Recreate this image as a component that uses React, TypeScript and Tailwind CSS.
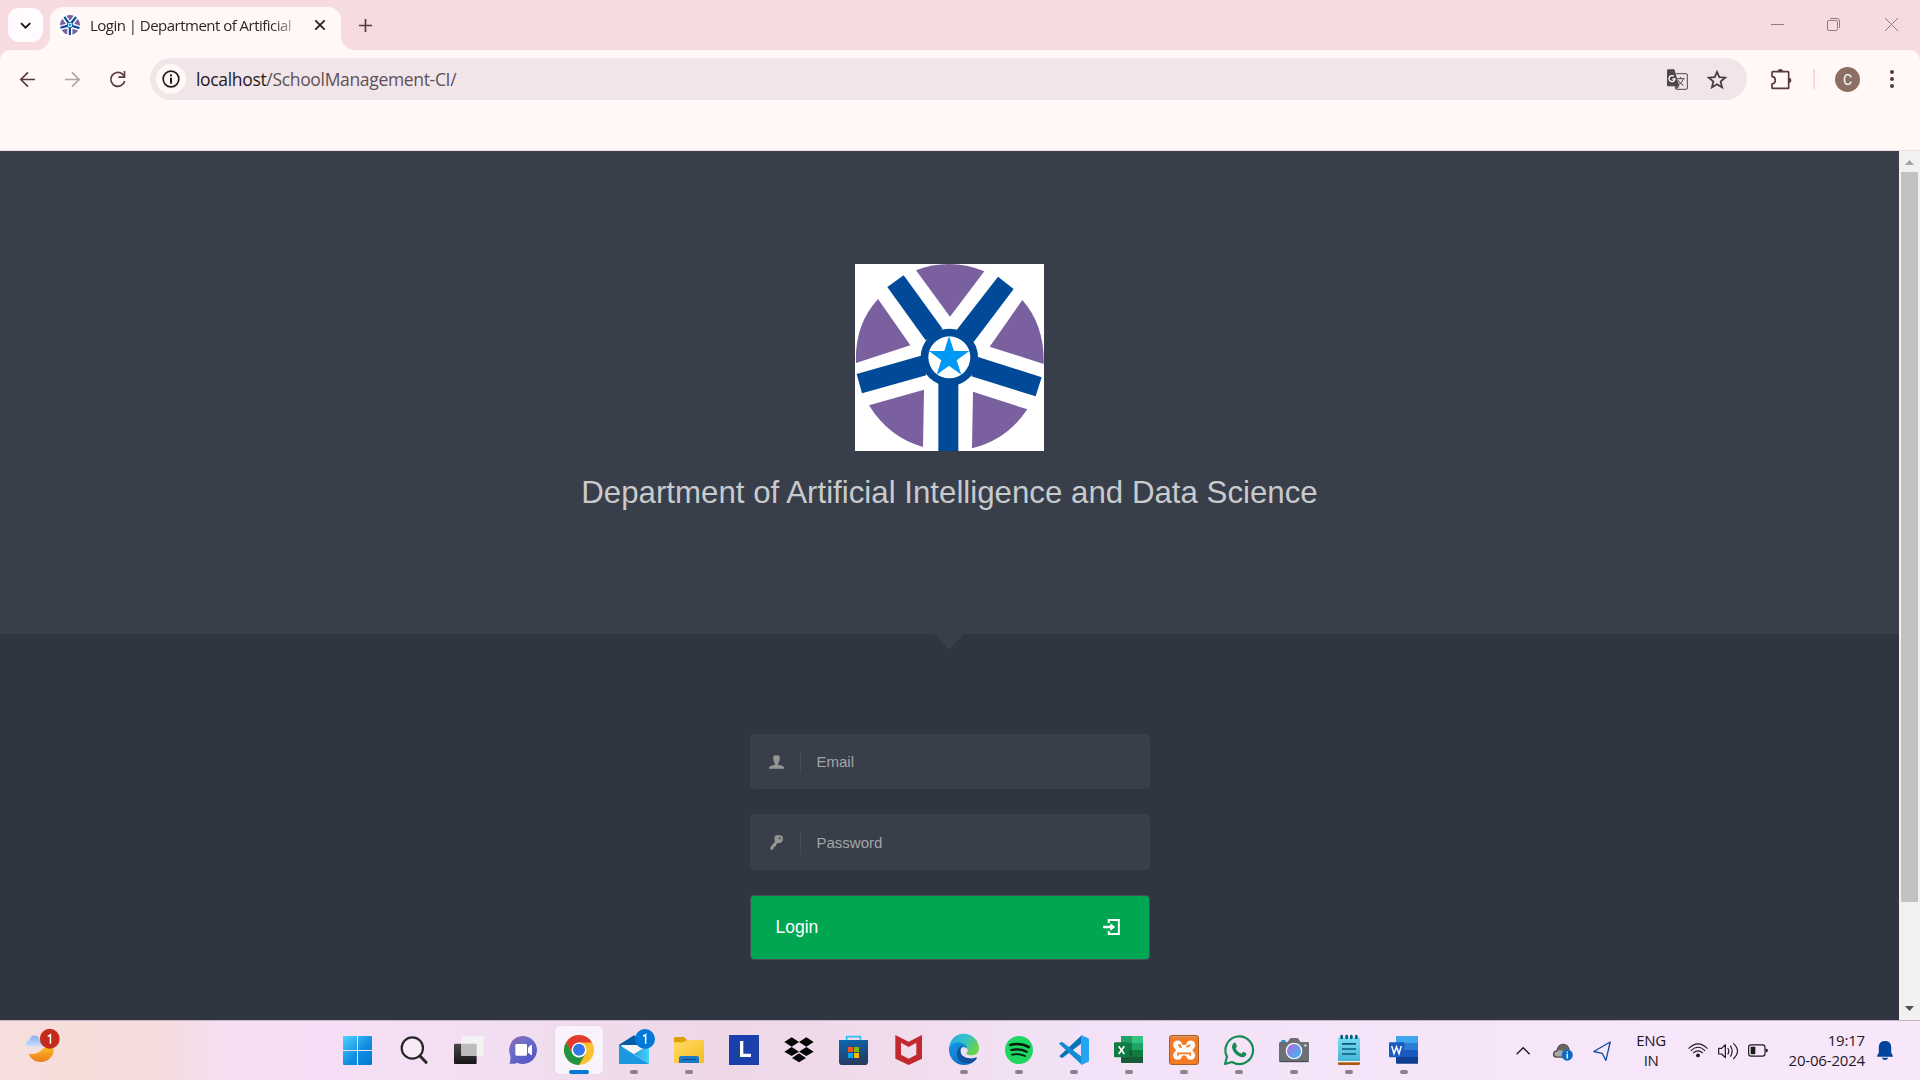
import type { ReactNode } from 'react';

const ui = "font-['Open_Sans','Noto_Sans',sans-serif] font-normal";
const page = "font-['Liberation_Sans',Arial,sans-serif]";

type IconProps = { box: string; w: string; children: ReactNode };

function Icon({ box, w, children }: IconProps) {
  return (
    <svg viewBox={box} className={`block shrink-0 overflow-visible ${w}`} fill="none">
      {children}
    </svg>
  );
}

function Emblem({ className }: { className: string }) {
  return (
    <svg viewBox="45 42 567 561" preserveAspectRatio="none" className={`block ${className}`}>
      <rect x="45" y="42" width="567" height="561" fill="#fff" />
      <g fill="#7b609f">
        <path d="M228 61Q330 22 433 64L330 200Z" />
        <path d="M114 147L211 286L48 339Q43 225 114 147Z" />
        <path d="M547 150L449 290L611 342Q614 226 547 150Z" />
        <path d="M252 419L87 466Q146 562 249 591Z" />
        <path d="M399 425L562 478Q500 570 396 595Z" />
      </g>
      <g fill="#004a99">
        <path d="M142 111L191 76L308 237L257 271Z" />
        <path d="M474 80L521 117L401 276L350 240Z" />
        <path d="M50 372L243 317L259 376L66 430Z" />
        <path d="M605 382L412 320L394 379L587 439Z" />
        <rect x="295" y="395" width="60" height="208" />
        <circle cx="328" cy="322" r="86" />
      </g>
      <circle cx="328" cy="322" r="63" fill="#fff" />
      <path d="M327 258L342 303H388L350 331L364 374L327 347L290 374L304 331L267 303H313Z" fill="#0098f5" />
    </svg>
  );
}

function TabStrip() {
  return (
    <div className="flex h-[50px] items-start bg-[#f6dbe0]">
      <div className="ml-2 mt-2 flex h-[34px] w-[35px] items-center justify-center rounded-[11px] bg-[#fffbfe]">
        <Icon box="60 62 32 26" w="w-[11px] h-[9px]">
          <path d="M63 68L76 81L90 68" stroke="#1f1a1c" strokeWidth="5.5" />
        </Icon>
      </div>
      <div className="-ml-[7px] h-[14px] w-[14px] self-end bg-[radial-gradient(circle_at_0_0,transparent_13.5px,#fff8f6_14.5px)]" />
      <div className="mt-[7px] flex h-[43px] w-[291px] items-center rounded-t-[13px] bg-[#fff8f6]">
        <Emblem className="ml-[10px] -mt-[7px] h-5 w-5" />
        <div className={`ml-[10px] -mt-[8px] w-[206px] whitespace-nowrap text-[15px] leading-5 tracking-[-0.52px] text-[#2c2628] [mask-image:linear-gradient(to_right,black_88%,rgba(0,0,0,0.25)_100%)] ${ui}`}>
          Login | Department of Artificial
        </div>
        <div className="ml-[19px] -mt-[7px]">
          <Icon box="945 60 30 30" w="w-[10px] h-[10px]">
            <path d="M946 61L974 89M974 61L946 89" stroke="#2b2225" strokeWidth="5.5" />
          </Icon>
        </div>
      </div>
      <div className="h-[14px] w-[14px] self-end bg-[radial-gradient(circle_at_100%_0,transparent_13.5px,#fff8f6_14.5px)]" />
      <div className="ml-1 mt-[18.500px]">
        <Icon box="1077 56 39 39" w="w-[13px] h-[13px]">
          <path d="M1096.500 56V95M1077 75.500H1116" stroke="#4b3d40" strokeWidth="5" />
        </Icon>
      </div>
      <div className="ml-auto mr-[22px] mt-[18px] flex">
        <Icon box="453 54 39 39" w="w-[13px] h-[13px]">
          <path d="M453 73.500H492" stroke="#8f7d80" strokeWidth="3" />
        </Icon>
        <div className="ml-[43px]">
          <Icon box="621 54 39 39" w="w-[13px] h-[13px]">
            <rect x="622.500" y="61.500" width="30" height="30" rx="4" stroke="#8f7d80" strokeWidth="3" />
            <path d="M630 55.500H651Q658.500 55.500 658.500 63V84" stroke="#8f7d80" strokeWidth="3" />
          </Icon>
        </div>
        <div className="ml-[45px]">
          <Icon box="795 54 39 39" w="w-[13px] h-[13px]">
            <path d="M795 54L834 93M834 54L795 93" stroke="#8f7d80" strokeWidth="3" />
          </Icon>
        </div>
      </div>
    </div>
  );
}

function Toolbar() {
  return (
    <div className="bg-[#f6dbe0]">
      <div className="h-[101px] rounded-t-[10px] border-b border-[#f6dbe0] bg-[#fff8f6] pt-2">
        <div className="flex h-[42px] items-center">
          <div className="ml-5 w-[45px]">
            <Icon box="60 214 45 45" w="w-[15px] h-[15px]">
              <path d="M105 236.500H64M84 215L62.500 236.500L84 258" stroke="#58393d" strokeWidth="5" />
            </Icon>
          </div>
          <div className="w-[45px]">
            <Icon box="195 214 45 45" w="w-[15px] h-[15px]">
              <path d="M195 236.500H236M216 215L237.500 236.500L216 258" stroke="#b1a5a5" strokeWidth="5" />
            </Icon>
          </div>
          <div className="w-10">
            <Icon box="330 212 48 48" w="w-4 h-4">
              <path d="M374 242A21 21 0 1 1 367 221L373 227" stroke="#58393d" strokeWidth="5" />
              <path d="M376 212V233H355V228H371V212Z" fill="#58393d" />
            </Icon>
          </div>
          <div className="flex h-[42px] w-[1597px] items-center rounded-full bg-[#f1e5e9] pl-[6px]">
            <div className="flex h-[30px] w-[30px] items-center justify-center rounded-full bg-[#fff8f6]">
              <Icon box="487 211 54 54" w="w-[18px] h-[18px]">
                <circle cx="514" cy="238" r="23.500" stroke="#201a1b" strokeWidth="5" />
                <rect x="511" y="234" width="6" height="18" fill="#201a1b" />
                <rect x="511" y="224" width="6" height="6" fill="#201a1b" />
              </Icon>
            </div>
            <div className={`-mt-px ml-[10px] whitespace-nowrap text-[17.500px] leading-6 tracking-[-0.33px] text-[#1f1a1c] ${ui}`}>
              localhost<span className="text-[#5e5156]">/SchoolManagement-CI/</span>
            </div>
            <div className="ml-auto">
              <Icon box="141 207 63 63" w="w-[21px] h-[21px]">
                <rect x="166" y="221" width="36" height="47" rx="4" stroke="#514648" strokeWidth="3" />
                <path d="M145 208H163L178 259H145Q141 259 141 255V212Q141 208 145 208Z" fill="#514648" />
                <path d="M162 229A9 9 0 1 0 165 237H157" stroke="#fff" strokeWidth="4" />
                <path d="M170 236H194M182 231V236M190 237Q186 250 172 257M175 241Q180 252 191 256" stroke="#514648" strokeWidth="3" />
                <path d="M167 259H178L170 268Z" fill="#514648" />
              </Icon>
            </div>
            <div className="ml-[19px] mr-5">
              <Icon box="263 209 60 58" w="w-5 h-[19px]">
                <path d="M293 215L300 231L318 232.500L304 244.500L308.500 262L293 252.500L277.500 262L282 244.500L268 232.500L286 231Z" stroke="#4a3d40" strokeWidth="5.500" />
              </Icon>
            </div>
          </div>
          <div className="ml-6">
            <Icon box="453 204 63 63" w="w-[21px] h-[21px]">
              <path d="M458 212H504Q506 212 506 214V260Q506 262 504 262H458Q456 262 456 260V249Q466 247 466 237.500Q466 228 456 226V214Q456 212 458 212Z" stroke="#58393d" strokeWidth="5" />
              <path d="M473 212A8 8 0 0 1 489 212ZM506 230A8 8 0 0 1 506 246Z" fill="#58393d" />
            </Icon>
          </div>
          <div className="ml-[21px] h-5 w-[2px] bg-[#f9d8de]" />
          <div className="ml-5 flex h-[25px] w-[25px] items-center justify-center rounded-full bg-[#8d6e63] pt-px font-['Roboto',sans-serif] text-[14px] leading-none text-white">C</div>
          <div className="ml-[30px]">
            <Icon box="811 209 12 54" w="w-1 h-[18px]">
              <g fill="#58393d">
                <circle cx="817" cy="215" r="6" />
                <circle cx="817" cy="236" r="6" />
                <circle cx="817" cy="257" r="6" />
              </g>
            </Icon>
          </div>
        </div>
      </div>
    </div>
  );
}

function Field({ label, icon, size }: { label: string; icon: ReactNode; size: string }) {
  return (
    <div className={`flex w-[400px] items-center rounded-[4px] bg-[#383e4a] ${size}`}>
      <div className="flex w-[50px] justify-center pl-[2px]">{icon}</div>
      <div className="h-[23px] w-px bg-[#464a54]" />
      <div className="ml-[15.500px] mt-px text-[15px] leading-5 text-[#a4a5a8]">{label}</div>
    </div>
  );
}

function LoginPage() {
  return (
    <div className={`flex h-[869px] ${page}`}>
      <main className="flex w-[1899px] flex-col items-center bg-[#303641]">
        <header className="flex h-[483px] w-full flex-col items-center bg-[#383e4a] pt-[113px]">
          <Emblem className="h-[187px] w-[189px]" />
          <h1 className="mt-[22px] whitespace-nowrap text-[31.250px] leading-10 text-[#c8cacc]">
            Department of Artificial Intelligence and Data Science
          </h1>
        </header>
        <div className="-ml-px h-4 w-[30px] bg-[#383e4a] [clip-path:polygon(0_0,100%_0,50%_100%)]" />
        <form className="mt-[84px] flex flex-col pl-[1px]">
          <Field
            label="Email"
            size="h-[55px]"
            icon={
              <Icon box="86 404 45 41" w="w-[15px] h-[14px]">
                <path d="M99 408Q100 404 108.500 404Q117 404 118 408Q120 422 113 429V433Q128 436 131 440V445H86V440Q90 436 104 433V429Q97 422 99 408Z" fill="#969594" />
              </Icon>
            }
          />
          <Field
            label="Password"
            size="mt-[25px] h-14"
            icon={
              <Icon box="86 644 45 45" w="w-[15px] h-[15px]">
                <path d="M107 645H121Q128 647 128 654Q128 666 119 668L111 669L107 673V678L102 679L99 686L93 690L90 687L91 679L104 664L102 654Q103 647 107 645Z" fill="#969594" />
                <circle cx="118.500" cy="653.500" r="3.500" fill="#565a63" />
              </Icon>
            }
          />
          <button type="button" className="mt-[25px] flex h-[65px] w-[400px] items-center justify-between rounded-[4px] border border-[#4b4d57] bg-[#00a651] pl-[24.500px] pr-[29px] text-left text-[17.500px] text-white">
            Login
            <div className="-mt-[2px]">
              <Icon box="1089 896 51 49" w="w-[17px] h-4">
                <path d="M1106 908V899H1137V942H1106V933" stroke="#fff" strokeWidth="6" />
                <path d="M1089 917H1111V909L1126 920.500L1111 932V924H1089Z" fill="#fff" />
              </Icon>
            </div>
          </button>
        </form>
      </main>
      <div className="flex w-[21px] flex-col items-center bg-[#f1f1f1] pt-[9px]">
        <div className="h-[5px] w-[9px] bg-[#a3a3a3] [clip-path:polygon(50%_0,100%_100%,0_100%)]" />
        <div className="mt-[7px] h-[730px] w-[17px] bg-[#c1c1c1]" />
        <div className="mb-[9px] mt-auto h-[5px] w-[9px] bg-[#505050] [clip-path:polygon(0_0,100%_0,50%_100%)]" />
      </div>
    </div>
  );
}

function Gradients() {
  return (
    <svg className="absolute h-0 w-0">
      <defs>
        <linearGradient id="win" x1="72" y1="78" x2="156" y2="165" gradientUnits="userSpaceOnUse"><stop stopColor="#4fcfff" /><stop offset=".55" stopColor="#118ddf" /><stop offset="1" stopColor="#0078d4" /></linearGradient>
        <linearGradient id="teams" x1="0" y1="0" x2="0.7" y2="1"><stop stopColor="#9a5ca0" /><stop offset=".4" stopColor="#6b6fca" /><stop offset="1" stopColor="#5355c5" /></linearGradient>
        <linearGradient id="dark" x1="0" y1="0" x2="0" y2="1"><stop stopColor="#484848" /><stop offset="1" stopColor="#171717" /></linearGradient>
        <linearGradient id="folder" x1="0" y1="0" x2="1" y2="1"><stop stopColor="#ffd965" /><stop offset="1" stopColor="#f8bd22" /></linearGradient>
        <linearGradient id="store" x1="0" y1="0" x2=".3" y2="1"><stop stopColor="#0b68b4" /><stop offset="1" stopColor="#263c61" /></linearGradient>
        <linearGradient id="edgeTop" x1="0" y1="0" x2="1" y2=".5"><stop stopColor="#1fa8e5" /><stop offset=".55" stopColor="#35c3c8" /><stop offset="1" stopColor="#68d34b" /></linearGradient>
        <linearGradient id="edgeBlue" x1="0" y1="0" x2="1" y2="1"><stop stopColor="#1698e6" /><stop offset="1" stopColor="#0762bb" /></linearGradient>
        <linearGradient id="moon" x1="0" y1="0" x2="0" y2="1"><stop stopColor="#fdb91e" /><stop offset="1" stopColor="#ed7b21" /></linearGradient>
        <linearGradient id="cloud" x1="0" y1="0" x2="0" y2="1"><stop stopColor="#86adef" /><stop offset="1" stopColor="#cee0fa" /></linearGradient>
        <linearGradient id="lens" x1="0" y1="0" x2="1" y2="1"><stop stopColor="#c163de" /><stop offset="1" stopColor="#26c2f3" /></linearGradient>
        <linearGradient id="pad" x1="0" y1="0" x2="0" y2="1"><stop stopColor="#7bdcf0" /><stop offset="1" stopColor="#45b5d6" /></linearGradient>
        <linearGradient id="mail" x1="0" y1="0" x2="1" y2="0"><stop stopColor="#26a4e4" /><stop offset="1" stopColor="#45d2f5" /></linearGradient>
      </defs>
    </svg>
  );
}

type App = { name: string; box: string; state?: 'active' | 'open'; art: ReactNode };

const apps: App[] = [
  { name: 'Start', box: '72 75 90 90', art: (
    <g fill="url(#win)"><path d="M72 78H111V120H69V81Q69 78 72 78ZM114 78H153Q156 78 156 81V120H114ZM69 123H111V165H72Q69 165 69 162ZM114 123H156V162Q156 165 153 165H114Z" /></g>
  ) },
  { name: 'Search', box: '237 75 90 90', art: (
    <g stroke="#292727"><circle cx="277" cy="114" r="32" strokeWidth="6.500" fill="#fff" fillOpacity=".35" /><path d="M300 138L318 157" strokeWidth="9" strokeLinecap="round" /></g>
  ) },
  { name: 'Task view', box: '402 75 90 90', art: (
    <><rect x="402" y="101" width="68" height="61" rx="3" fill="url(#dark)" /><rect x="424" y="78" width="67" height="60" rx="3" fill="#f4f3f4" /><path d="M424 101H467Q470 101 470 104V138H427Q424 138 424 135Z" fill="#bdbbbc" /></>
  ) },
  { name: 'Chat', box: '567 75 90 90', art: (
    <><path d="M610 78A42 42 0 1 1 591 158Q583 163 568 161Q573 150 571 137A42 42 0 0 1 610 78Z" fill="url(#teams)" /><rect x="586" y="102" width="35" height="35" rx="4" fill="#fff" /><path d="M624 113L633 104Q636 104 636 107V133Q636 136 633 136L624 127Z" fill="#fff" /></>
  ) },
  { name: 'Chrome', box: '252 75 90 90', state: 'active', art: (
    <><circle cx="297" cy="120" r="45" fill="#fbc02d" /><path d="M258 97.500A45 45 0 0 1 336 97.500H297L277.500 131Z" fill="#e33b2e" /><path d="M258 97.500A45 45 0 0 0 297 165L316.500 131L297 142L277.500 131Z" fill="#229342" /><circle cx="297" cy="120" r="22.500" fill="#fff" /><circle cx="297" cy="119" r="18" fill="#3478e8" /></>
  ) },
  { name: 'Mail', box: '417 75 90 90', state: 'open', art: (
    <><path d="M417 104L462 76L507 104V130H417Z" fill="#075aa8" /><path d="M424 105H500V132H424Z" fill="#f5f5f5" /><path d="M417 104L507 162H420Q417 162 417 159Z" fill="#1b99e0" /><path d="M507 104V162L462 132Z" fill="url(#mail)" /><circle cx="495" cy="87" r="30" fill="#0279d6" /><path d="M489 79L497 74V101" stroke="#fff" strokeWidth="4.500" /></>
  ) },
  { name: 'Files', box: '582 75 90 90', state: 'open', art: (
    <><path d="M582 84Q582 81 586 81H610Q614 81 617 86L622 91H668V110H582Z" fill="#dba006" /><path d="M582 97H610L620 90H669Q672 90 672 93V156Q672 159 669 159H585Q582 159 582 156Z" fill="url(#folder)" /><path d="M597 159V144Q597 138 603 138H651Q657 138 657 144V159Z" fill="#1a78c7" /><path d="M607 148.500H647" stroke="#064a85" strokeWidth="3" /></>
  ) },
  { name: 'L', box: '747 75 90 90', art: (
    <><rect x="747" y="75" width="90" height="90" fill="#1b3fac" /><path d="M780 94L772 145L784 142Z" fill="#0a5560" /><path d="M785 93V136H813" stroke="#fff" strokeWidth="10" /></>
  ) },
  { name: 'Dropbox', box: '-18 75 90 90', art: (
    <path d="M5 82L27 96L5 110L-17 96ZM49 82L71 96L49 110L27 96ZM5 111L27 125L5 138L-17 125ZM49 111L71 125L49 138L27 125ZM27 130L48 144L27 157L6 144Z" fill="#050505" />
  ) },
  { name: 'Store', box: '147 75 90 90', art: (
    <><path d="M170 96V80H211V96" stroke="#2fc2f7" strokeWidth="5" /><path d="M147 90H234V155Q234 165 224 165H157Q147 165 147 155Z" fill="url(#store)" /><path d="M174 111H189V126H174Z" fill="#f35325" /><path d="M192 111H207V126H192Z" fill="#81bc06" /><path d="M174 129H189V144H174Z" fill="#05a6f0" /><path d="M192 129H207V144H192Z" fill="#ffba08" /></>
  ) },
  { name: 'McAfee', box: '312 75 90 90', art: (
    <path fillRule="evenodd" d="M316 75L356 95L396 75V146L356 165L316 146ZM333 98V134L356 146L379 134V98L356 111Z" fill="#c1292e" />
  ) },
  { name: 'Edge', box: '477 75 90 90', state: 'open', art: (
    <><path d="M477 120A45 45 0 0 1 567 113Q567 135 545 136Q530 136 529 130Q538 122 528 111Q500 90 477 120Z" fill="url(#edgeTop)" /><path d="M477 118Q482 97 505 97Q528 99 532 116Q517 104 511 120Q510 150 553 146Q560 142 561 144Q547 166 521 165A45 45 0 0 1 477 118Z" fill="url(#edgeBlue)" /><path d="M514 107Q493 124 505 147Q514 160 538 160Q552 157 561 144Q560 140 550 145Q512 148 511 121Q511 111 517 108Z" fill="#12529c" /></>
  ) },
  { name: 'Spotify', box: '642 75 90 90', state: 'open', art: (
    <><circle cx="687" cy="120" r="42" fill="#1ed760" /><g stroke="#08170d" strokeLinecap="round"><path d="M661 105Q691 97 716 111" strokeWidth="8" /><path d="M664 120Q689 114 710 125" strokeWidth="6.500" /><path d="M666 134Q687 129 705 138" strokeWidth="5.500" /></g></>
  ) },
  { name: 'VS Code', box: '807 75 90 90', state: 'open', art: (
    <><path d="M809 137L876 75V99L818 143Q816 144 814 143L808 139Q806 138 809 137Z" fill="#0872b8" /><path d="M809 103Q806 100 808 99L814 96Q816 95 818 97L876 141V165Z" fill="#118bd4" /><path d="M873 75L894 84Q897 86 897 89V152Q897 155 894 156L873 165Z" fill="#24a5f2" /></>
  ) },
  { name: 'Excel', box: '42 75 90 90', state: 'open', art: (
    <><path d="M66 78H129V159H66Q63 159 63 156V81Q63 78 66 78Z" fill="#185c37" /><path d="M63 81Q63 78 66 78H96V99H63Z" fill="#21a366" /><path d="M96 78H129V99H96Z" fill="#33c481" /><path d="M63 99H96V120H63Z" fill="#107c41" /><path d="M96 99H129V120H96Z" fill="#21a366" /><path d="M96 120H129V141H96Z" fill="#107c41" /><rect x="42" y="97" width="46" height="45" rx="3" fill="#107c41" /><path d="M56 109L73 132M73 109L56 132" stroke="#fff" strokeWidth="5" /></>
  ) },
  { name: 'XAMPP', box: '207 75 90 90', state: 'open', art: (
    <>
      <rect x="208.500" y="76.500" width="87" height="87" rx="7" fill="#f47b25" stroke="#a95c24" strokeWidth="3" />
      <path d="M214 80H290" stroke="#d7976b" strokeWidth="4" />
      <g fill="#fff"><circle cx="233" cy="105" r="13.500" /><circle cx="272" cy="105" r="13.500" /><circle cx="233" cy="136" r="13.500" /><circle cx="272" cy="136" r="13.500" /><rect x="227" y="104" width="51" height="33" /></g>
      <path d="M234 105H240V111H246M271 105L259 111M234 137V130H271V137M252.500 93V105M252.500 137V148" stroke="#f47b25" strokeWidth="5" />
    </>
  ) },
  { name: 'WhatsApp', box: '372 75 90 90', state: 'open', art: (
    <><path d="M375 162L381 140A41.500 41.500 0 1 1 396 156Z" stroke="#168b52" strokeWidth="6.500" strokeLinejoin="round" /><path d="M402 98Q406 97 408 101L411 109L407 116Q413 127 424 131L430 125L439 130Q440 141 427 142C408 139 396 123 396 109Q397 101 402 98Z" fill="#168b52" /></>
  ) },
  { name: 'Camera', box: '537 75 90 90', state: 'open', art: (
    <><rect x="543" y="90" width="14" height="12" rx="3" fill="#1da2e3" /><path d="M541 96H563L569 87Q571 84 574 84H591Q594 84 596 87L601 96H623Q627 96 627 100V152Q627 156 623 156H541Q537 156 537 152V100Q537 96 541 96Z" fill="#6b7077" /><path d="M539 155H625" stroke="#41464c" strokeWidth="3" /><circle cx="582" cy="123" r="23" fill="url(#lens)" stroke="#f4f4f4" strokeWidth="4" /><path d="M616 102V111M611.500 106.500H620.500" stroke="#d2d5d7" strokeWidth="3" /></>
  ) },
  { name: 'Notepad', box: '702 75 90 90', state: 'open', art: (
    <><path d="M714 150H780V161Q780 165 776 165H718Q714 165 714 161Z" fill="#ad560d" /><rect x="714" y="152" width="66" height="5" fill="#f4f4ee" /><path d="M714 82H780V153H714Z" fill="url(#pad)" /><g stroke="#075c79"><path d="M726 101.500H768M726 117H768M726 132H768" strokeWidth="5" /><path d="M725 78V84M740 78V84M754 78V84M769 78V84" strokeWidth="8" strokeLinecap="round" /></g></>
  ) },
  { name: 'Word', box: '867 75 90 90', state: 'open', art: (
    <><path d="M891 78H954V161H891Q888 161 888 158V81Q888 78 891 78Z" fill="#103f91" /><path d="M888 81Q888 78 891 78H954V99H888Z" fill="#41a5ee" /><path d="M888 99H954V120H888Z" fill="#2b7cd3" /><path d="M888 120H954V141H888Z" fill="#185abd" /><rect x="867" y="97" width="46" height="45" rx="3" fill="#185abd" /><path d="M875 108L882 131L889.500 110L897 131L904 108" stroke="#fff" strokeWidth="4.500" /></>
  ) },
];

function TaskButton({ app }: { app: App }) {
  return (
    <div className="flex w-[55px] justify-center" title={app.name}>
      <div className={`mt-[5px] flex h-12 w-12 flex-col items-center rounded-[5px] pt-[9px] ${app.state === 'active' ? 'bg-[#fbf3fb] shadow-[0_0_1px_1px_#e9d9ea]' : ''}`}>
        <Icon box={app.box} w="w-[30px] h-[30px]">{app.art}</Icon>
        {app.state === 'active' && <div className="mt-[5px] h-1 w-5 rounded-full bg-[#0278d7]" />}
        {app.state === 'open' && <div className="mt-[5px] h-1 w-2 rounded-full bg-[#8b808c]" />}
      </div>
    </div>
  );
}

function Taskbar() {
  return (
    <div className={`flex h-[60px] items-start border-t border-[#c9b6c4] bg-[linear-gradient(90deg,#f7dfdf_0px,#f6ddd9_80px,#f5dcdf_170px,#f6dff4_225px,#f6dff6_320px,#f2def2_500px,#eed8e8_720px,#f0dced_900px,#f3e2f7_1080px,#f7e6fa_1500px,#f8e7fb_1920px)] ${ui}`}>
      <div className="ml-[26px] mt-[7px]">
        <Icon box="78 54 103 105" w="w-[34px] h-[35px]">
          <path d="M86 132Q113 136 133 113L162 112Q164 133 150 146Q137 159 116 156Q95 153 86 132Z" fill="url(#moon)" />
          <path d="M86 110Q78 109 78 101Q78 92 88 91Q91 76 104 76Q116 76 119 89L132 95V110Z" fill="url(#cloud)" />
          <circle cx="150" cy="86" r="30" fill="#c42b1c" />
          <path d="M144 79L152 74V101" stroke="#fff" strokeWidth="4.500" />
        </Icon>
      </div>
      <div className="ml-[271.500px] flex">
        {apps.map((app) => <TaskButton key={app.name} app={app} />)}
      </div>
      <div className="ml-auto mr-[27px] flex h-[59px] items-center text-[#1d191d]">
        <Icon box="79 138 40 24" w="w-[14px] h-2">
          <path d="M80 160L99.500 140L119 160" stroke="#1d191d" strokeWidth="4" />
        </Icon>
        <div className="ml-[23px] mt-[3px]">
          <Icon box="189 129 60 52" w="w-5 h-[17px]">
            <path d="M199 169Q190 168 190 160Q191 150 201 149Q204 131 220 130Q234 131 237 145L241 160L220 169Z" fill="#aaa6a5" stroke="#4a4646" strokeWidth="4" />
            <path d="M202 149Q216 145 225 154L237 146Q232 130 219 130Q205 131 202 149Z" fill="#696564" />
            <circle cx="232" cy="163" r="17" fill="#0b6bc2" />
            <path d="M232 159V173M232 152V156" stroke="#fff" strokeWidth="4" />
          </Icon>
        </div>
        <div className="ml-5">
          <Icon box="309 119 54 61" w="w-[18px] h-5">
            <path d="M361 122L311 151L337 157L348 178Z" stroke="#114a9c" strokeWidth="4" strokeLinejoin="round" />
          </Icon>
        </div>
        <div className="-mt-[2px] ml-[19px] w-[42px] text-center text-[15px] leading-5 tracking-[-0.4px]">ENG<br />IN</div>
        <div className="ml-4">
          <Icon box="594 125 60 46" w="w-5 h-[15px]">
            <g stroke="#1d191d" strokeWidth="3.500"><path d="M595 142Q624 113 653 142" /><path d="M602 149Q624 127 646 149" /><path d="M609 156Q624 142 639 156" /></g>
            <circle cx="624" cy="163" r="6" fill="#1d191d" />
          </Icon>
        </div>
        <div className="ml-[10px]">
          <Icon box="684 123 60 54" w="w-5 h-[18px]">
            <g stroke="#1d191d" strokeWidth="3.500" strokeLinejoin="round"><path d="M686 142H695L706 131V170L695 159H686Z" /><path d="M713 141Q720 150 713 160M721 134Q732 150 721 167M730 127Q755 150 730 174" /></g>
          </Icon>
        </div>
        <div className="ml-[10px]">
          <Icon box="774 131 60 38" w="w-5 h-[13px]">
            <rect x="776" y="133" width="49" height="34" rx="7" stroke="#1d191d" strokeWidth="3.500" />
            <rect x="782" y="139" width="14" height="22" rx="2" fill="#1d191d" />
            <path d="M827 144Q834 145 834 150Q834 155 827 156Z" fill="#1d191d" />
          </Icon>
        </div>
        <div className="-mt-[2px] w-[97px] whitespace-nowrap text-right text-[15px] leading-5 tracking-[-0.18px]">19:17<br />20-06-2024</div>
        <div className="ml-3">
          <Icon box="1161 123 48 58" w="w-4 h-[19px]">
            <path d="M1166 159V141Q1167 123 1185 123Q1203 123 1204 141V159L1209 168V171H1161V168ZM1175 174H1195Q1192 181 1185 181Q1178 181 1175 174Z" fill="#00459b" />
          </Icon>
        </div>
      </div>
    </div>
  );
}

export default function App() {
  return (
    <div className="flex h-[1080px] w-[1920px] flex-col overflow-hidden">
      <Gradients />
      <TabStrip />
      <Toolbar />
      <LoginPage />
      <Taskbar />
    </div>
  );
}
